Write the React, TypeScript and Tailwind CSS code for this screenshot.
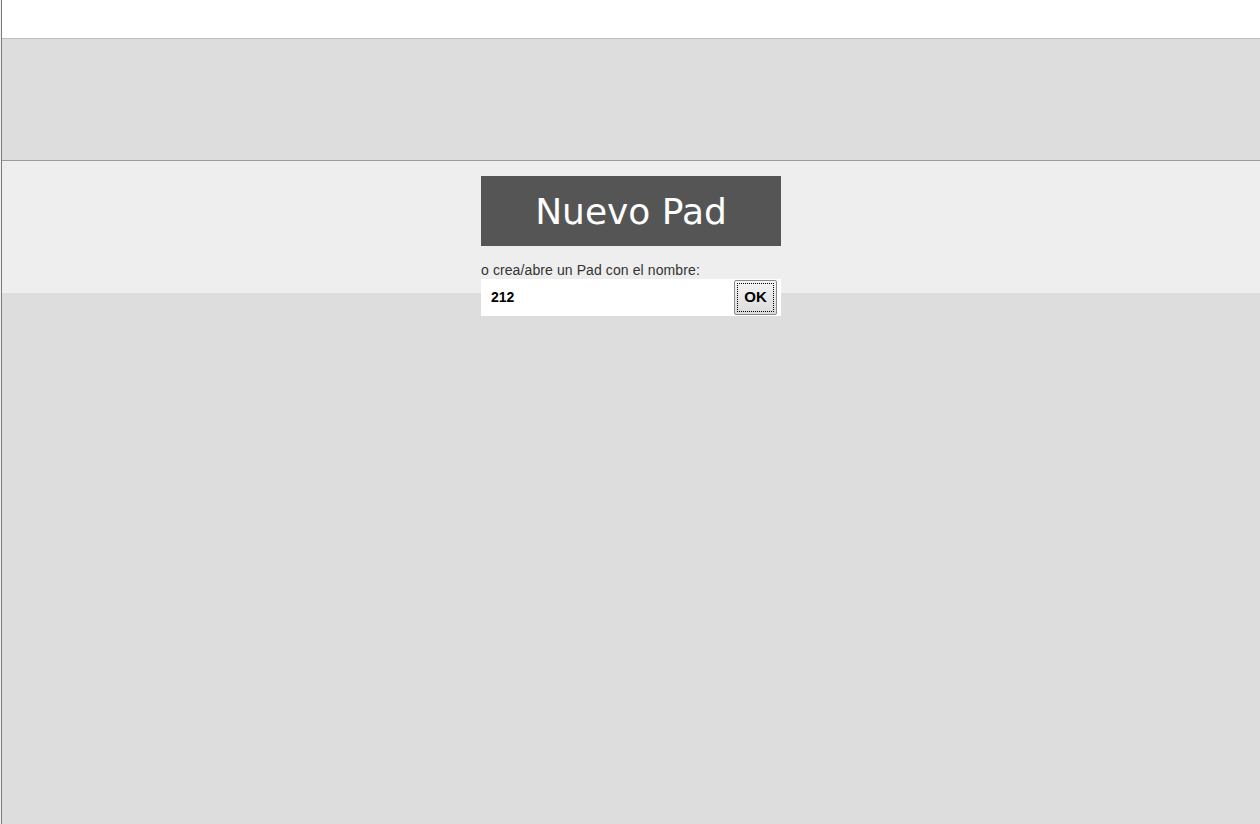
import React from "react";

export default function App() {
  return (
    <div className="min-h-screen w-full bg-[#dddddd] flex" style={{ fontFamily: '"Liberation Sans", Arial, sans-serif' }}>
      <div className="w-px bg-[#f0f0f0] shrink-0" />
      <div className="w-px bg-[#7a7a7a] shrink-0" />
      <div className="flex-1 flex flex-col min-w-0">
        <div className="h-[39px] bg-white border-b border-[#bbbbbb]" />
        <div className="h-[122px] bg-[#dddddd] border-b border-[#9a9a9a]" />
        <div className="h-[132px] bg-[#eeeeee] pt-[15px]">
          <div className="w-[300px] mx-auto">
            <button
              className="w-full h-[70px] bg-[#555555] text-white text-[36px] leading-none flex items-center justify-center pt-[2px]"
              style={{ fontFamily: '"DejaVu Sans", Verdana, sans-serif' }}
            >
              Nuevo Pad
            </button>
            <div className="mt-[16px] text-[14px] leading-[16px] text-[#333333] tracking-[0.1px]">
              o crea/abre un Pad con el nombre:
            </div>
            <div className="mt-[1px] h-[37px] bg-white flex items-center justify-between pl-[10px] pr-[4px]">
              <span className="text-[14px] font-bold text-black">212</span>
              <button className="w-[43px] h-[35px] border border-[#8a8a8a] rounded-[2px] bg-gradient-to-b from-[#f4f4f4] to-[#dcdcdc] p-[2px]">
                <span className="flex w-full h-full items-center justify-center border border-dotted border-black text-[15px] font-bold text-black">
                  OK
                </span>
              </button>
            </div>
          </div>
        </div>
      </div>
    </div>
  );
}
